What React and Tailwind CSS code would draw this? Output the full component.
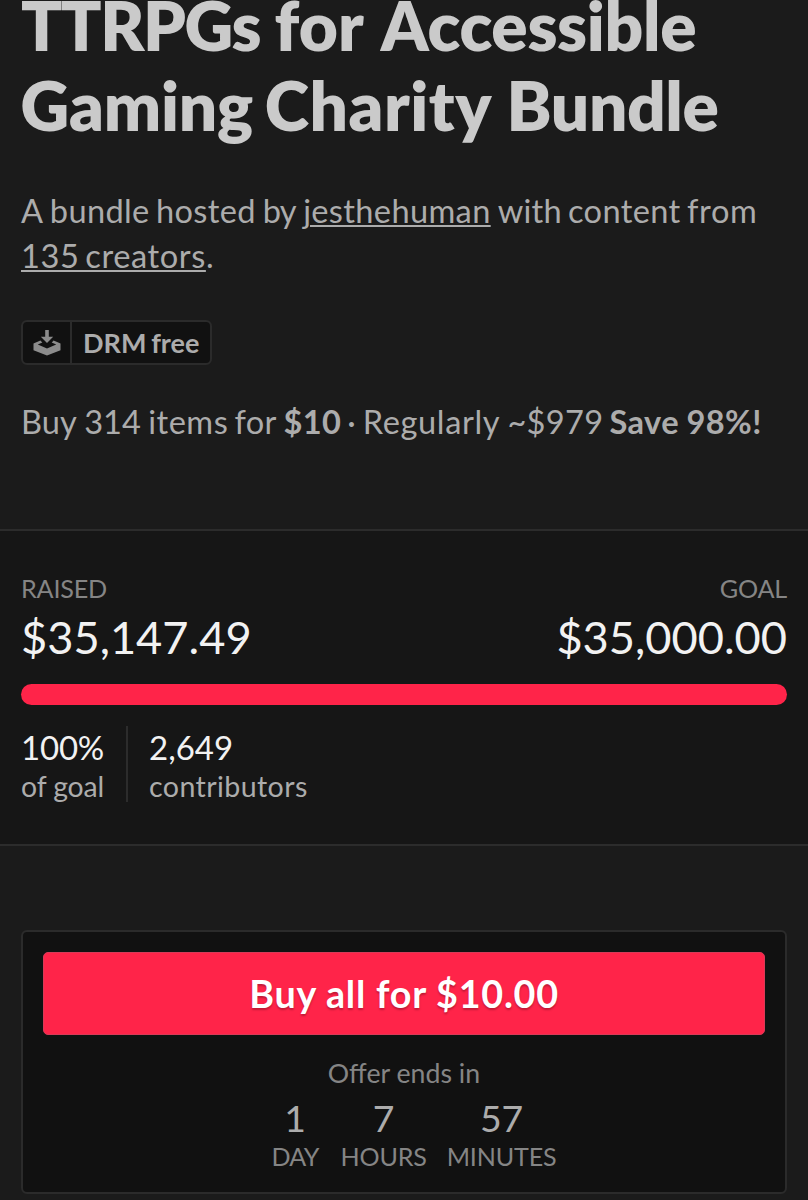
function DownloadIcon() {
  return (
    <svg className="block h-[26px] w-[28px]" viewBox="0 0 28 26" fill="#8c8c8c">
      <path d="M12.2 0h3.6v6.8h4.4L14 13 7.8 6.8h4.4z" />
      <path d="M7.4 10.6 0.5 13.4v6.8L14 25.4l13.5-5.2v-6.8l-6.9-2.8-1.9 1.8 4.5 2L14 18.6l-9.2-4.2 4.5-2z" />
    </svg>
  );
}

function Countdown({ value, unit, className }) {
  return (
    <div className={className}>
      <div className="h-[44px] text-[37.4px] leading-[42px] tracking-normal text-[#acacac]">{value}</div>
      <div className="h-[30px] text-[25.1px] leading-[30px]">{unit}</div>
    </div>
  );
}

export default function App() {
  return (
    <div className="flex h-[1200px] w-[808px] flex-col overflow-hidden bg-[#1b1b1b] font-['Lato',sans-serif] text-[#acacac]">
      <header className="-mt-4 flex h-[545px] shrink-0 flex-col items-start px-[21px]">
        <h1 className="h-[162px] pt-[0.6px] text-[67.5px] leading-[80.2px] font-extrabold whitespace-nowrap text-[#cacaca]">
          <span className="tracking-[-1.5px]">TTRPGs</span>{" "}
          <span className="ml-[-1.1px] tracking-[0.2px]">for</span>{" "}
          <span className="ml-[1.2px] tracking-[-0.35px]">Accessible</span>
          <br />
          <span className="ml-[-0.5px] tracking-[-0.25px]">Gaming</span>{" "}
          <span className="ml-[-3.6px] tracking-[0.5px]">Charity</span>{" "}
          <span className="ml-[-1px] tracking-[-0.4px]">Bundle</span>
        </h1>
        <p className="mt-[42px] text-[32.6px] leading-[45px] whitespace-nowrap">
          A <span className="ml-[-0.5px] tracking-[0.35px]">bundle</span>{" "}
          <span className="ml-[-1.9px] tracking-[0.3px]">hosted</span>{" "}
          <span className="ml-[-1.2px] tracking-[-0.9px]">by</span>{" "}
          <a className="ml-[-0.9px] tracking-[0.35px] underline decoration-2 underline-offset-[2px]">jesthehuman</a>{" "}
          <span className="ml-[-1.3px] tracking-[0.2px]">with</span>{" "}
          <span className="ml-[-2.2px] tracking-[0.35px]">content</span>{" "}
          <span className="ml-[-2px] tracking-[0.7px]">from</span>
          <br />
          <a className="tracking-[0.6px] [word-spacing:-3.2px] underline decoration-2 underline-offset-[2px]">
            135 creators
          </a>
          .
        </p>
        <div className="mt-[42px] flex h-[45px] w-[191px] rounded-md border-2 border-[#2b2b2b] bg-[#111111]">
          <div className="flex w-[49px] items-center justify-center border-r-2 border-[#2b2b2b]">
            <DownloadIcon />
          </div>
          <div className="pl-[11px] text-[27px] leading-[41px] font-bold whitespace-nowrap [word-spacing:-1.8px]">
            DRM free
          </div>
        </div>
        <p className="mt-[34px] text-[32.6px] leading-[45.5px] whitespace-nowrap">
          Buy 314 <span className="ml-[-1px] tracking-[0.5px]">items</span>{" "}
          <span className="ml-[-2.2px] tracking-[0.4px]">for</span>{" "}
          <strong className="ml-[-1.6px] tracking-[0.3px]">$10</strong>{" "}
          <span className="ml-[-2.4px]">·</span>{" "}
          <span className="ml-[-1.2px] tracking-[0.6px]">Regularly</span>{" "}
          <span className="ml-[-1px] tracking-[0.3px]">~$979</span>{" "}
          <strong className="ml-[-2.3px] tracking-[0.4px] [word-spacing:-0.8px]">Save 98%!</strong>
        </p>
      </header>

      <section className="h-[317px] shrink-0 border-y-2 border-[#2c2c2c] bg-[#161616] px-[21px] pt-[42px]">
        <div className="flex justify-between text-[25.2px] leading-[30px] tracking-[-0.2px] text-[#858585]">
          <span>RAISED</span>
          <span>GOAL</span>
        </div>
        <div className="flex h-[68px] justify-between pt-[4px] text-[45.2px] leading-[60px] text-[#f2f2f2]">
          <span>$35,147.49</span>
          <span>$35,000.00</span>
        </div>
        <div className="mt-[13px] h-[21px] rounded-full bg-[#ff2449]" />
        <div className="mt-[21px] flex h-[76px]">
          <div className="w-[107px] border-r-2 border-[#2c2c2c]">
            <div className="h-[40px] text-[33px] leading-[42px] tracking-[-0.2px] text-[#f2f2f2]">100%</div>
            <div className="text-[28.4px] leading-[40px] tracking-[-0.1px]">of goal</div>
          </div>
          <div className="pl-[21px]">
            <div className="h-[40px] text-[33px] leading-[42px] text-[#f2f2f2]">2,649</div>
            <div className="text-[28.6px] leading-[40px] tracking-[0.4px]">contributors</div>
          </div>
        </div>
      </section>

      <section className="mx-[21px] mt-[84px] flex h-[264px] shrink-0 flex-col rounded-md border-2 border-[#2b2b2b] bg-[#111111] px-5 pt-5 text-[#858585]">
        <button className="h-[83px] rounded-[5px] border border-[#d93a58] bg-[#ff2449] text-[37.7px] leading-[81px] font-bold tracking-[0.75px] text-white [text-shadow:0_2px_2px_rgba(0,0,0,0.25)]">
          Buy all for $10.00
        </button>
        <div className="mt-[21px] h-[34px] text-center text-[26.7px] leading-[34px]">Offer ends in</div>
        <div className="mt-[7px] flex justify-center pl-[20px] text-center">
          <Countdown value="1" unit="DAY" className="tracking-[-0.8px]" />
          <Countdown value="7" unit="HOURS" className="ml-[22px] tracking-[-0.2px]" />
          <Countdown value="57" unit="MINUTES" className="ml-[20px] tracking-[-0.15px]" />
        </div>
      </section>
    </div>
  );
}
